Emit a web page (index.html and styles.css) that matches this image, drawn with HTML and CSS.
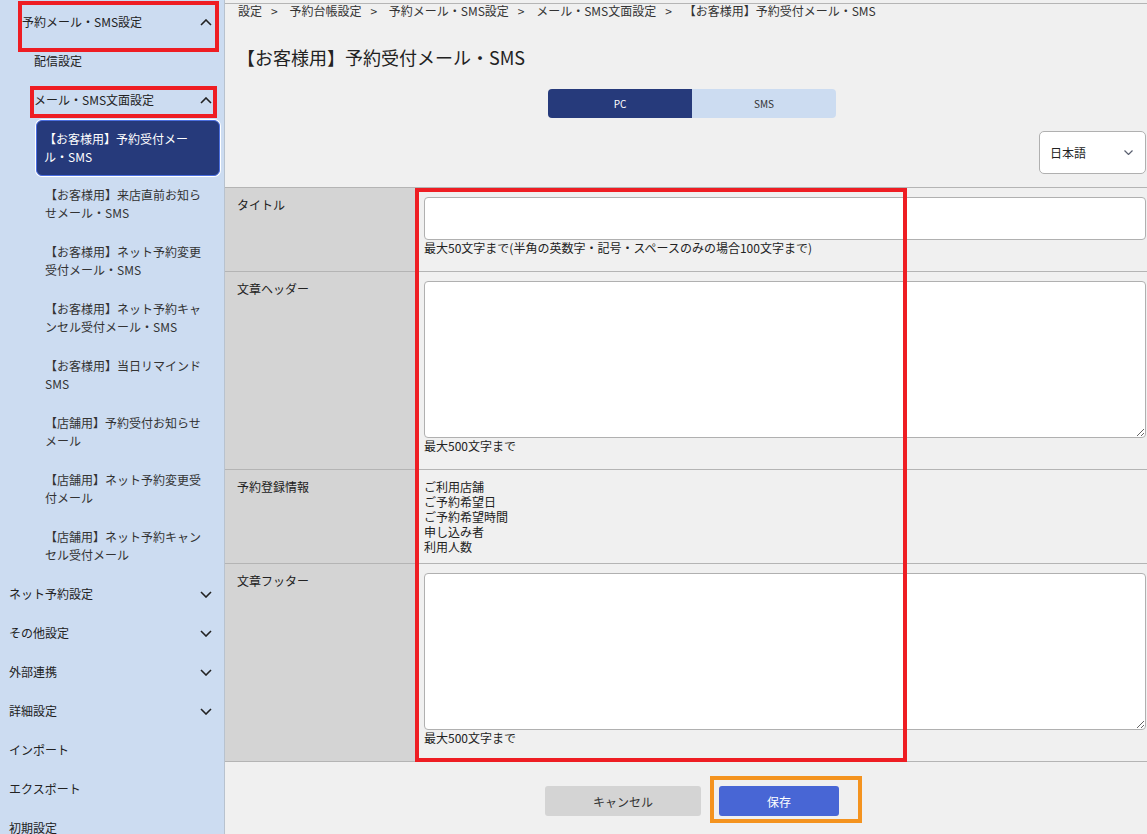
FILE: index.html
```html
<!DOCTYPE html>
<html lang="ja">
<head>
  <meta charset="UTF-8">
  <meta name="viewport" content="width=device-width, initial-scale=1.0">
  <title>【お客様用】予約受付メール・SMS</title>
  <link rel="stylesheet" href="styles.css">
</head>
<body>
  <div class="layout">
    <nav class="sidebar">
      <ul class="menu">
        <li class="menu-item">
          <div class="menu-head lvl1 mark-a">
            <span>予約メール・SMS設定</span>
            <svg class="chev" width="12" height="7" viewBox="0 0 12 7"><polyline points="1,6 6,1 11,6"/></svg>
          </div>
          <ul class="submenu">
            <li class="menu-head lvl2">配信設定</li>
            <li>
              <div class="menu-head lvl2 mark-b">
                <span>メール・SMS文面設定</span>
                <svg class="chev" width="12" height="7" viewBox="0 0 12 7"><polyline points="1,6 6,1 11,6"/></svg>
              </div>
              <ul class="pages">
                <li class="page active">【お客様用】予約受付メール・SMS</li>
                <li class="page">【お客様用】来店直前お知らせメール・SMS</li>
                <li class="page">【お客様用】ネット予約変更受付メール・SMS</li>
                <li class="page">【お客様用】ネット予約キャンセル受付メール・SMS</li>
                <li class="page">【お客様用】当日リマインドSMS</li>
                <li class="page">【店舗用】予約受付お知らせメール</li>
                <li class="page">【店舗用】ネット予約変更受付メール</li>
                <li class="page">【店舗用】ネット予約キャンセル受付メール</li>
              </ul>
            </li>
          </ul>
        </li>
        <li class="menu-head">
          <span>ネット予約設定</span>
          <svg class="chev" width="12" height="7" viewBox="0 0 12 7"><polyline points="1,1 6,6 11,1"/></svg>
        </li>
        <li class="menu-head">
          <span>その他設定</span>
          <svg class="chev" width="12" height="7" viewBox="0 0 12 7"><polyline points="1,1 6,6 11,1"/></svg>
        </li>
        <li class="menu-head">
          <span>外部連携</span>
          <svg class="chev" width="12" height="7" viewBox="0 0 12 7"><polyline points="1,1 6,6 11,1"/></svg>
        </li>
        <li class="menu-head">
          <span>詳細設定</span>
          <svg class="chev" width="12" height="7" viewBox="0 0 12 7"><polyline points="1,1 6,6 11,1"/></svg>
        </li>
        <li class="menu-head">インポート</li>
        <li class="menu-head">エクスポート</li>
        <li class="menu-head">初期設定</li>
      </ul>
    </nav>

    <main class="content">
      <div class="breadcrumb">
        <span>設定</span><span class="sep">&gt;</span>
        <span>予約台帳設定</span><span class="sep">&gt;</span>
        <span>予約メール・SMS設定</span><span class="sep">&gt;</span>
        <span>メール・SMS文面設定</span><span class="sep">&gt;</span>
        <span>【お客様用】予約受付メール・SMS</span>
      </div>

      <h1 class="page-title">【お客様用】予約受付メール・SMS</h1>

      <div class="tabs">
        <button class="tab current">PC</button>
        <button class="tab">SMS</button>
      </div>

      <div class="lang-row">
        <div class="lang-select">
          <span>日本語</span>
          <svg width="9" height="5" viewBox="0 0 9 5"><polyline points="0.5,0.5 4.5,4.5 8.5,0.5"/></svg>
        </div>
      </div>

      <div class="form">
        <div class="form-row">
          <div class="form-label">タイトル</div>
          <div class="form-value">
            <input class="field" type="text">
            <p class="help">最大50文字まで(半角の英数字・記号・スペースのみの場合100文字まで)</p>
          </div>
        </div>
        <div class="form-row">
          <div class="form-label">文章ヘッダー</div>
          <div class="form-value">
            <textarea class="field area"></textarea>
            <p class="help">最大500文字まで</p>
          </div>
        </div>
        <div class="form-row">
          <div class="form-label">予約登録情報</div>
          <div class="form-value info">
            ご利用店舗<br>
            ご予約希望日<br>
            ご予約希望時間<br>
            申し込み者<br>
            利用人数
          </div>
        </div>
        <div class="form-row">
          <div class="form-label">文章フッター</div>
          <div class="form-value">
            <textarea class="field area"></textarea>
            <p class="help">最大500文字まで</p>
          </div>
        </div>
        <div class="mark-form"></div>
      </div>

      <div class="actions">
        <button class="btn btn-cancel">キャンセル</button>
        <button class="btn btn-save">保存</button>
      </div>
    </main>
  </div>
</body>
</html>
```

FILE: styles.css
```css
html, body {
  margin: 0;
  height: 100%;
}
body {
  font-family: "Noto Sans CJK JP", "Noto Sans", sans-serif;
  font-size: 12px;
  color: #222;
  background-color: #f0f0f0;
  overflow: hidden;
}
ul {
  list-style: none;
  margin: 0;
  padding: 0;
}
.layout {
  display: flex;
  height: 834px;
}

/* sidebar */
.sidebar {
  position: relative;
  width: 224px;
  flex-shrink: 0;
  padding-top: 3px;
  background-color: #ccdcf1;
  border-right: 1px solid #b8c2ce;
  overflow: hidden;
}
.menu-head {
  position: relative;
  display: flex;
  align-items: center;
  justify-content: space-between;
  padding: 10px 12px 11px 9px;
  line-height: 18px;
  color: #222;
}
.menu-head.lvl1 {
  padding-left: 22px;
}
.menu-head.lvl2 {
  padding-left: 34px;
}
.chev {
  fill: none;
  stroke: #222;
  stroke-width: 1.6;
}
.page {
  padding: 10px 19px 11px 45px;
  line-height: 18px;
  color: #333;
}
.page.active {
  margin: 0 4px 0 36px;
  padding: 9px 24px 9px 7px;
  color: #fff;
  background-color: #263a7b;
  border: 1px solid #4a6ee0;
  border-radius: 6px;
  box-shadow: 0 0 0 1px #fff;
}

/* red / orange marks drawn over the screen */
.mark-a::after,
.mark-b::after,
.mark-form,
.btn-save::after {
  content: '';
  position: absolute;
  pointer-events: none;
}
.mark-a::after {
  top: -2px;
  left: 18px;
  right: 5px;
  bottom: -10px;
  border: 4px solid #ee1d23;
}
.mark-b::after {
  top: 5px;
  left: 30px;
  right: 7px;
  bottom: 2px;
  border: 4px solid #ee1d23;
}

/* main */
.content {
  flex: 1;
  margin-top: 3px;
  border-top: 1px solid #b5b5b5;
  min-width: 0;
}
.breadcrumb {
  padding-left: 13px;
  line-height: 14px;
  color: #333;
  white-space: nowrap;
}
.breadcrumb .sep {
  margin: 0 9px;
}
.page-title {
  margin: 27px 0 0;
  padding-left: 12px;
  font-size: 18px;
  font-weight: normal;
  line-height: 24px;
  color: #222;
}
.tabs {
  display: flex;
  justify-content: center;
  margin-top: 20px;
  padding-left: 12px;
}
.tab {
  width: 144px;
  height: 29px;
  border: none;
  font-family: inherit;
  font-size: 10px;
  color: #333;
  background-color: #ccdcf1;
}
.tab:first-child {
  border-radius: 4px 0 0 4px;
}
.tab:last-child {
  border-radius: 0 4px 4px 0;
}
.tab.current {
  color: #fff;
  background-color: #263a7b;
}
.lang-row {
  display: flex;
  justify-content: flex-end;
  margin-top: 13px;
  padding-right: 1px;
}
.lang-select {
  display: flex;
  align-items: center;
  justify-content: space-between;
  box-sizing: border-box;
  width: 107px;
  height: 43px;
  padding: 0 12px 0 10px;
  background-color: #fff;
  border: 1px solid #b0b0b0;
  border-radius: 5px;
}
.lang-select svg {
  fill: none;
  stroke: #5a6070;
  stroke-width: 1.2;
}

/* form */
.form {
  position: relative;
  margin-top: 13px;
  border-top: 1px solid #b4b4b4;
}
.form-row {
  display: grid;
  grid-template-columns: 190px 1fr;
  border-bottom: 1px solid #b4b4b4;
}
.form-label {
  padding: 10px 12px;
  line-height: 14px;
  background-color: #d4d4d4;
  color: #222;
}
.form-value {
  padding: 9px 1px 8px 9px;
}
.form-value.info {
  padding-bottom: 9px;
  line-height: 15px;
}
.field {
  display: block;
  box-sizing: border-box;
  width: 100%;
  height: 43px;
  margin: 0;
  border: 1px solid #b0b0b0;
  border-radius: 4px;
  background-color: #fff;
  font-family: inherit;
}
.field.area {
  height: 157px;
}
.help {
  margin: 0 0 8px;
  font-size: 12px;
  line-height: 15px;
  color: #222;
}
.mark-form {
  top: 0;
  bottom: 0;
  left: 190px;
  width: 492px;
  border: 4px solid #ee1d23;
  box-sizing: border-box;
}

/* buttons */
.actions {
  display: flex;
  justify-content: center;
  gap: 18px;
  margin-top: 24px;
  padding-left: 12px;
}
.btn {
  height: 30px;
  border: none;
  border-radius: 3px;
  font-family: inherit;
  font-size: 12px;
}
.btn-cancel {
  width: 156px;
  color: #333;
  background-color: #d4d4d4;
}
.btn-save {
  position: relative;
  width: 120px;
  color: #fff;
  background-color: #4866d5;
}
.btn-save::after {
  top: -10px;
  left: -9px;
  right: -23px;
  bottom: -7px;
  border: 4px solid #f4931f;
}
```
